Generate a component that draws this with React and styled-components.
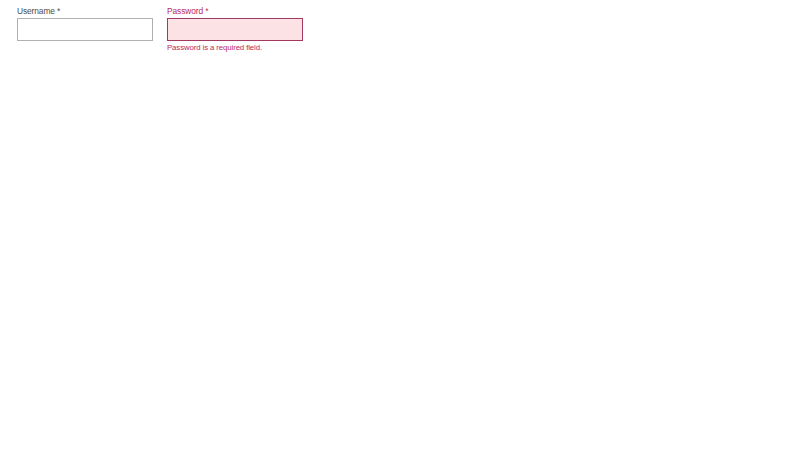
import React from 'react';
import styled, { createGlobalStyle } from 'styled-components';

const GlobalStyle = createGlobalStyle`
  body {
    margin: 0;
    background: #ffffff;
    font-family: 'Liberation Sans', Arial, sans-serif;
    color: #333;
  }
`;

const Form = styled.form`
  display: flex;
  gap: 14px;
  padding: 5px 17px;
`;

const Field = styled.div`
  display: flex;
  flex-direction: column;
  width: 136px;
`;

const Label = styled.label`
  font-size: 8.4px;
  line-height: 13px;
  letter-spacing: -0.1px;
  color: ${(p) => (p.$invalid ? '#b82a5c' : '#4a4a4a')};
`;

const Input = styled.input`
  box-sizing: border-box;
  width: 136px;
  height: 23px;
  margin: 0;
  padding: 2px 4px;
  font-size: 10px;
  font-family: inherit;
  border: 1px solid ${(p) => (p.$invalid ? '#a3385f' : '#b0b0b0')};
  background: ${(p) => (p.$invalid ? '#fde2e5' : '#ffffff')};
  outline: none;
`;

const Error = styled.div`
  margin-top: 2px;
  font-size: 7.8px;
  line-height: 10px;
  letter-spacing: -0.1px;
  color: #b82a5c;
`;

export default function App() {
  return (
    <>
      <GlobalStyle />
      <Form>
        <Field>
          <Label>Username *</Label>
          <Input type="text" />
        </Field>
        <Field>
          <Label $invalid>Password *</Label>
          <Input type="password" $invalid />
          <Error>Password is a required field.</Error>
        </Field>
      </Form>
    </>
  );
}
